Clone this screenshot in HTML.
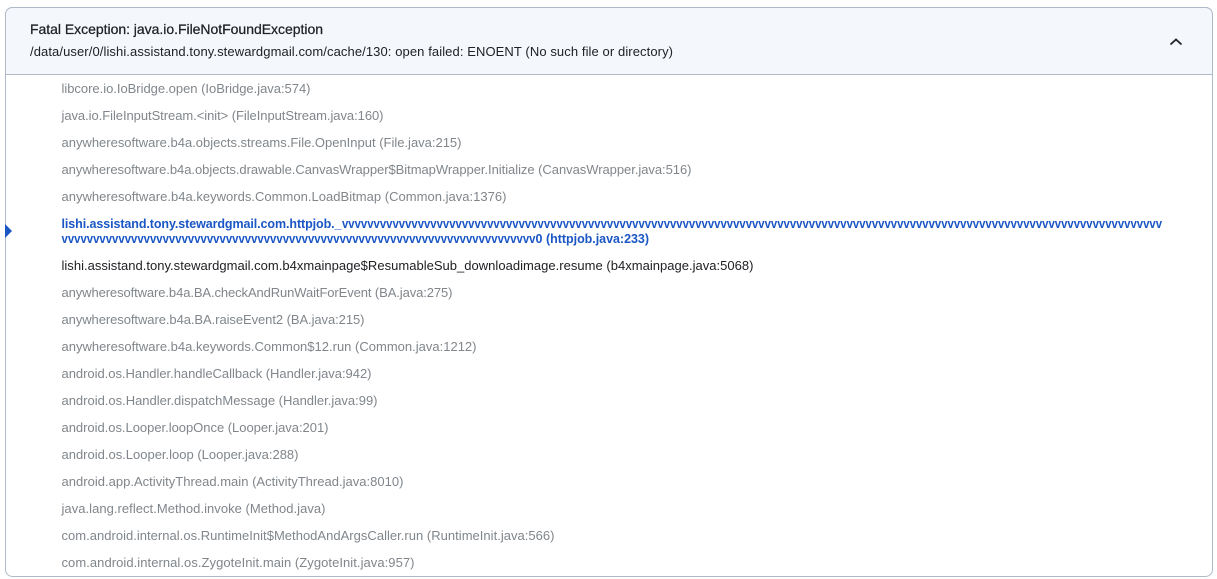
<!DOCTYPE html>
<html><head><meta charset="utf-8"><style>
html,body{margin:0;padding:0;background:#fff;width:1217px;height:579px;overflow:hidden}
svg{display:block}
text{font-family:"Liberation Sans",sans-serif;font-size:13px;fill:#80868b}
.h{fill:#202124}
.t{fill:#202124;font-size:14px;stroke:#202124;stroke-width:.25px}
.b{fill:#1a56c4;font-weight:bold;font-size:12.5px}
.d{fill:#202124}
</style></head><body>
<svg width="1217" height="579" viewBox="0 0 1217 579" xmlns="http://www.w3.org/2000/svg">
<rect x="5.5" y="7.5" width="1207" height="569" rx="7" fill="#fff" stroke="#b0b9c8"/>
<path d="M5.5 74.5V14.5a7 7 0 0 1 7-7H1205.5a7 7 0 0 1 7 7V74.5Z" fill="#f4f8fd" stroke="#b0b9c8"/>
<text class="t" x="30" y="34" textLength="293" lengthAdjust="spacing">Fatal Exception: java.io.FileNotFoundException</text>
<text class="h" x="30" y="56" textLength="643" lengthAdjust="spacing">/data/user/0/lishi.assistand.tony.stewardgmail.com/cache/130: open failed: ENOENT (No such file or directory)</text>
<path d="M1170.5 44.5L1176 39.5L1181.5 44.5" fill="none" stroke="#202124" stroke-width="1.8"/>
<path d="M5 224L12 231L5 238Z" fill="#1a56c4"/>
<text x="61.5" y="93" textLength="249" lengthAdjust="spacing">libcore.io.IoBridge.open (IoBridge.java:574)</text>
<text x="61.5" y="120" textLength="322" lengthAdjust="spacing">java.io.FileInputStream.&lt;init&gt; (FileInputStream.java:160)</text>
<text x="61.5" y="147" textLength="400" lengthAdjust="spacing">anywheresoftware.b4a.objects.streams.File.OpenInput (File.java:215)</text>
<text x="61.5" y="174" textLength="630" lengthAdjust="spacing">anywheresoftware.b4a.objects.drawable.CanvasWrapper$BitmapWrapper.Initialize (CanvasWrapper.java:516)</text>
<text x="61.5" y="201" textLength="445" lengthAdjust="spacing">anywheresoftware.b4a.keywords.Common.LoadBitmap (Common.java:1376)</text>
<text class="b" x="61.5" y="228" textLength="280" lengthAdjust="spacing">lishi.assistand.tony.stewardgmail.com.httpjob._</text>
<text class="b" x="342" y="228" textLength="820" lengthAdjust="spacingAndGlyphs">vvvvvvvvvvvvvvvvvvvvvvvvvvvvvvvvvvvvvvvvvvvvvvvvvvvvvvvvvvvvvvvvvvvvvvvvvvvvvvvvvvvvvvvvvvvvvvvvvvvvvvvvvvvvvvvvvvvvvvvvvvvvvvvvvv</text>
<text class="b" x="61.5" y="243" textLength="474" lengthAdjust="spacingAndGlyphs">vvvvvvvvvvvvvvvvvvvvvvvvvvvvvvvvvvvvvvvvvvvvvvvvvvvvvvvvvvvvvvvvvvvvvvvvvvv</text>
<text class="b" x="535.5" y="243">0</text>
<text class="b" x="546" y="243" textLength="103" lengthAdjust="spacing">(httpjob.java:233)</text>
<text class="d" x="61.5" y="270" textLength="692" lengthAdjust="spacing">lishi.assistand.tony.stewardgmail.com.b4xmainpage$ResumableSub_downloadimage.resume (b4xmainpage.java:5068)</text>
<text x="61.5" y="297" textLength="391" lengthAdjust="spacing">anywheresoftware.b4a.BA.checkAndRunWaitForEvent (BA.java:275)</text>
<text x="61.5" y="324" textLength="303" lengthAdjust="spacing">anywheresoftware.b4a.BA.raiseEvent2 (BA.java:215)</text>
<text x="61.5" y="351" textLength="415" lengthAdjust="spacing">anywheresoftware.b4a.keywords.Common$12.run (Common.java:1212)</text>
<text x="61.5" y="378" textLength="310" lengthAdjust="spacing">android.os.Handler.handleCallback (Handler.java:942)</text>
<text x="61.5" y="405" textLength="316" lengthAdjust="spacing">android.os.Handler.dispatchMessage (Handler.java:99)</text>
<text x="61.5" y="432" textLength="267" lengthAdjust="spacing">android.os.Looper.loopOnce (Looper.java:201)</text>
<text x="61.5" y="459" textLength="237" lengthAdjust="spacing">android.os.Looper.loop (Looper.java:288)</text>
<text x="61.5" y="486" textLength="342" lengthAdjust="spacing">android.app.ActivityThread.main (ActivityThread.java:8010)</text>
<text x="61.5" y="513" textLength="264" lengthAdjust="spacing">java.lang.reflect.Method.invoke (Method.java)</text>
<text x="61.5" y="540" textLength="493" lengthAdjust="spacing">com.android.internal.os.RuntimeInit$MethodAndArgsCaller.run (RuntimeInit.java:566)</text>
<text x="61.5" y="567" textLength="353" lengthAdjust="spacing">com.android.internal.os.ZygoteInit.main (ZygoteInit.java:957)</text>
</svg>
</body></html>
